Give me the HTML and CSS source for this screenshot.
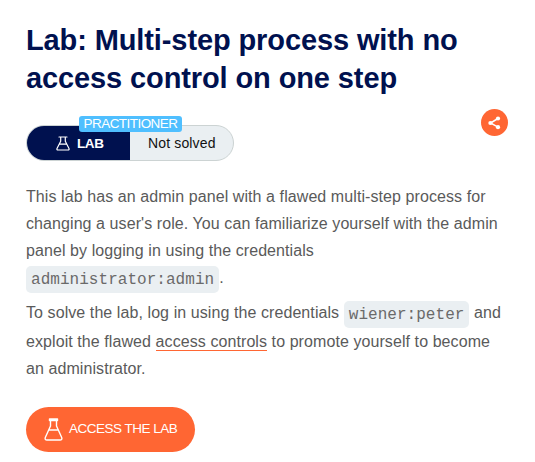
FILE: index.html
```html
<!DOCTYPE html>
<html lang="en">
<head>
<meta charset="utf-8">
<title>Lab: Multi-step process with no access control on one step</title>
<link rel="stylesheet" href="styles.css">
</head>
<body>
<main class="page">
  <h1 class="title">Lab: Multi-step process with no<br>access control on one step</h1>
  <div class="meta">
    <div class="status">
      <span class="level">PRACTITIONER</span>
      <span class="status-lab">
        <svg class="flask-small" width="14" height="15" viewBox="0 0 14 15" fill="none" stroke="#fff" stroke-width="1.2" stroke-linejoin="round" stroke-linecap="round"><path d="M3 1H11M4.700 1V5.200L1 12.400Q.5 14 2 14H12Q13.500 14 13 12.400L9.300 5.200V1M3.500 8.200H10.500"/></svg>
        <span>LAB</span>
      </span>
      <span class="status-text">Not solved</span>
    </div>
    <a class="share" aria-label="Share">
      <svg width="27" height="27" viewBox="0 0 27 27"><path d="M17 9.500L9.500 14L17 18.200" fill="none" stroke="#fff" stroke-width="1.500"/><circle cx="17" cy="9.500" r="2.100" fill="#fff"/><circle cx="9.400" cy="14" r="2.100" fill="#fff"/><circle cx="17" cy="18.200" r="2.100" fill="#fff"/></svg>
    </a>
  </div>
  <p class="text">This lab has an admin panel with a flawed multi-step process for<br>changing a user's role. You can familiarize yourself with the admin<br>panel by logging in using the credentials</p>
  <p class="text"><code class="code">administrator:admin</code>.</p>
  <p class="text spaced">To solve the lab, log in using the credentials <code class="code">wiener:peter</code> and</p>
  <p class="text last">exploit the flawed <a class="link">access controls</a> to promote yourself to become<br>an administrator.</p>
  <a class="button">
    <svg width="19" height="23" viewBox="0 0 19 23" fill="none" stroke="#fff" stroke-width="1.400" stroke-linejoin="round" stroke-linecap="round"><path d="M5.500 1H13.500V2.500H5.500ZM6.500 2.500V8L1.300 19.500Q.5 22 3 22H16Q18.500 22 17.700 19.500L12.500 8V2.500M4.800 12H14.200"/></svg>
    <span class="button-label">ACCESS THE LAB</span>
  </a>
</main>
</body>
</html>
```
FILE: styles.css
```css
body {
  margin: 0;
  background: #fff;
  color: #5a5a5a;
  font-family: "Liberation Sans", Arial, sans-serif;
}
.page {
  padding: 21px 26px 0;
}
.title {
  margin: 0;
  color: #00114f;
  font-size: 29px;
  line-height: 38px;
  letter-spacing: -0.11px;
  white-space: nowrap;
}
.meta {
  display: flex;
  align-items: flex-start;
  justify-content: space-between;
  margin-top: 12px;
}
.status {
  position: relative;
  display: flex;
  box-sizing: border-box;
  width: 208px;
  height: 36px;
  margin-top: 16px;
  border: 1px solid #ccd3d3;
  border-radius: 18px;
  background: #eaeff2;
}
.status-lab {
  display: flex;
  align-items: center;
  gap: 7px;
  box-sizing: border-box;
  width: 103px;
  padding-left: 29px;
  border-radius: 17px 0 0 17px;
  background: #00114f;
  color: #fff;
  font-size: 13.5px;
  font-weight: bold;
  letter-spacing: -0.4px;
}
.status-text {
  padding-left: 18px;
  color: #111;
  font-size: 14px;
  line-height: 34px;
  letter-spacing: 0.15px;
}
.level {
  position: absolute;
  top: -10px;
  left: 52px;
  width: 103px;
  height: 16px;
  border-radius: 3px;
  background: #4fbfff;
  color: #fff;
  font-size: 13.5px;
  line-height: 15px;
  letter-spacing: -0.55px;
  text-align: center;
}
.share {
  width: 27px;
  height: 27px;
  margin-right: 1px;
  border-radius: 50%;
  background: #ff6633;
}
.text {
  margin: 0;
  font-size: 16px;
  line-height: 27px;
  letter-spacing: 0.08px;
  white-space: nowrap;
}
.meta + .text {
  margin-top: 22px;
}
.spaced {
  margin-top: 8px;
}
.last {
  margin-top: 2px;
}
.code {
  padding: 5px 5px 4px;
  border-radius: 5px;
  background: #eaeff2;
  color: #6a6a6a;
  font-family: "Liberation Mono", monospace;
  font-size: 16px;
  line-height: 1;
  letter-spacing: 0.04px;
  vertical-align: -1px;
}
.link {
  border-bottom: 1px solid #ff6633;
}
.button {
  display: flex;
  align-items: center;
  gap: 6px;
  box-sizing: border-box;
  width: 169px;
  height: 45px;
  margin-top: 25px;
  padding-left: 18px;
  border-radius: 23px;
  background: #ff6633;
  color: #fff;
  font-size: 13.5px;
  letter-spacing: -0.5px;
}
.button-label {
  padding-bottom: 3px;
}
```
